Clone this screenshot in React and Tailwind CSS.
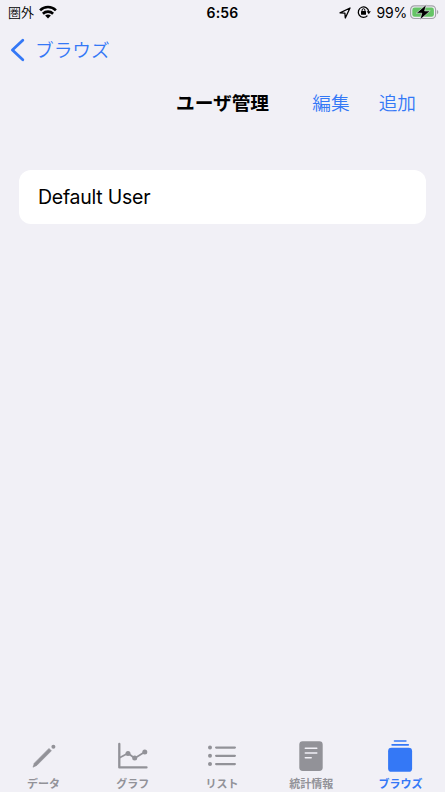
import { useState } from 'react'
import clsx from 'clsx'

const TABS = [
  { id: 'data',   label: 'データ',   Icon: PencilIcon },
  { id: 'graph',  label: 'グラフ',   Icon: GraphIcon },
  { id: 'list',   label: 'リスト',   Icon: ListIcon },
  { id: 'stats',  label: '統計情報', Icon: NoteIcon },
  { id: 'browse', label: 'ブラウズ', Icon: StackIcon },
]

function PencilIcon() {
  return (
    <svg width="32" height="34" viewBox="0 0 32 34" fill="currentColor">
      <path d="M5 28.2 6.3 24.2 21 9.4 23.4 11.8 8.8 26.4Z" stroke="currentColor" strokeWidth=".6" strokeLinejoin="round" />
      <circle cx="25.4" cy="7.8" r="2" />
    </svg>
  )
}

function GraphIcon() {
  return (
    <svg width="32" height="34" viewBox="0 0 32 34" fill="none" stroke="currentColor" strokeLinecap="round" strokeLinejoin="round">
      <path d="M2.3 5V28.4H29.5" strokeWidth="2.3" />
      <path d="M3 18.6 11 14.2 17.7 19.2 27.7 13" strokeWidth="1.7" />
      <g fill="currentColor" stroke="none">
        <circle cx="11" cy="14.4" r="2.5" />
        <circle cx="17.7" cy="19.1" r="2.5" />
        <circle cx="27.8" cy="13.1" r="2.5" />
      </g>
    </svg>
  )
}

function ListIcon() {
  return (
    <svg width="32" height="34" viewBox="0 0 32 34" fill="currentColor">
      {[8.6, 16.8, 25.1].map((y) => (
        <g key={y}>
          <circle cx="4" cy={y} r="2" />
          <rect x="9" y={y - 1.15} width="21" height="2.3" rx="1.15" />
        </g>
      ))}
    </svg>
  )
}

function NoteIcon() {
  return (
    <svg width="32" height="34" viewBox="0 0 32 34">
      <rect x="4.3" y="2.3" width="23.4" height="29.6" rx="3.4" fill="currentColor" />
      <path d="M10.3 9.2H21.8M10.3 14H21.8M10.3 18.7H16.2" stroke="#f1f0f6" strokeWidth="1.5" strokeLinecap="round" />
    </svg>
  )
}

function StackIcon() {
  return (
    <svg width="32" height="34" viewBox="0 0 32 34" fill="currentColor">
      <rect x="9.7" y="1.2" width="13" height="1.6" rx=".8" />
      <rect x="7.3" y="4.9" width="17.8" height="1.8" rx=".9" />
      <rect x="4.1" y="8.8" width="24" height="24" rx="3.4" />
    </svg>
  )
}

function StatusBar() {
  return (
    <div className="grid h-6 grid-cols-3 items-center pt-px text-black">
      <div className="flex items-center pl-2">
        <span className="text-[13px] leading-none font-[350]">圏外</span>
        <svg className="ml-[5px] -mt-px" width="18" height="14" viewBox="0 0 18 14" fill="none" stroke="currentColor" strokeWidth="2.6">
          <path d="M1.1 5.3C5.4.9 12.6.9 16.9 5.3" />
          <path d="M3.9 8.7C6.8 5.9 11.2 5.9 14.1 8.7" />
          <path d="M9 13.4 6.1 10.6Q9 8.3 11.9 10.6Z" fill="currentColor" stroke="none" />
        </svg>
      </div>

      <span className="text-center text-[14px] leading-none font-semibold tracking-[0.2px]">6:56</span>

      <div className="flex items-center justify-end pr-[6px]">
        <svg width="12" height="12" viewBox="0 0 12 12" fill="none" stroke="currentColor" strokeWidth="1.3" strokeLinejoin="round">
          <path d="M1 5.8 11 1 6.3 11 5.9 6.1Z" />
        </svg>
        <svg className="ml-[6px] -mt-px" width="14" height="14" viewBox="0 0 14 14" fill="none" stroke="currentColor">
          <path d="M10.4 10.6A5.2 5.2 0 1 1 11.7 6.6" strokeWidth="1.3" />
          <path d="M9.7 6.2H13.8L11.8 9.2Z" fill="currentColor" stroke="none" />
          <rect x="4" y="6.1" width="5" height="3.6" rx=".5" fill="currentColor" stroke="none" />
          <path d="M5.1 6.3V5.1a1.4 1.4 0 0 1 2.8 0v1.2" strokeWidth="1" />
        </svg>
        <span className="ml-[5px] text-[14px] leading-none tracking-[-0.2px]">99%</span>
        <svg className="ml-[3px] -mt-[2px]" width="29" height="16" viewBox="0 0 29 16">
          <rect x=".6" y="1.9" width="25" height="12.6" rx="3.8" fill="none" stroke="#a3a3a8" strokeWidth="1.2" />
          <rect x="2.3" y="3.6" width="21.6" height="9.2" rx="2.3" fill="#65c466" />
          <path d="M27 6.1C28.8 6.8 28.8 9.6 27 10.3Z" fill="#a3a3a8" />
          <path d="M16.4.5 6.3 9.2H11.8L10 15.7 20.2 6.9H14.6Z" fill="#000" stroke="#f1f0f6" strokeWidth=".6" />
        </svg>
      </div>
    </div>
  )
}

export default function App() {
  const [active, setActive] = useState('browse')

  return (
    <div className="flex h-screen flex-col overflow-hidden bg-[#f1f0f6] font-['Inter','Noto_Sans_CJK_JP',sans-serif]">
      <StatusBar />

      <button className="flex h-[52px] items-center self-start pl-[10px] text-[#3478f6]">
        <svg width="16" height="24" viewBox="0 0 16 24" fill="none" stroke="currentColor" strokeWidth="2.8" strokeLinecap="round" strokeLinejoin="round">
          <path d="M12.8 2.2 2.4 12 12.8 21.8" />
        </svg>
        <span className="ml-[9px] pt-[2px] text-[18.7px] leading-none font-[350]">ブラウズ</span>
      </button>

      <header className="grid h-[53px] grid-cols-[1fr_auto_1fr] items-center pt-[3px]">
        <h1 className="col-start-2 text-[18.7px] leading-none font-bold text-black">ユーザ管理</h1>
        <div className="flex justify-end gap-[29px] pr-[29px] text-[18.7px] leading-none font-[350] text-[#3478f6]">
          <button>編集</button>
          <button>追加</button>
        </div>
      </header>

      <main className="flex-1 px-[19px] pt-[41px]">
        <ul className="rounded-[12px] bg-white">
          <li className="flex h-[54px] items-center pt-px pl-[19px] text-[19.5px] tracking-[-0.25px] text-black">Default User</li>
        </ul>
      </main>

      <nav className="-ml-px grid h-[54px] grid-cols-5 pt-px">
        {TABS.map(({ id, label, Icon }) => (
          <button
            key={id}
            onClick={() => setActive(id)}
            className={clsx('flex flex-col items-center', active === id ? 'text-[#3478f6]' : 'text-[#929298]')}
          >
            <Icon />
            <span className="mt-[6px] text-[11px] leading-none font-bold">{label}</span>
          </button>
        ))}
      </nav>
    </div>
  )
}
